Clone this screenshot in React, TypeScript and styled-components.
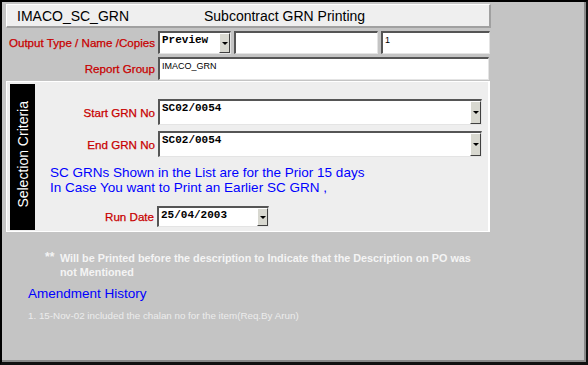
import React from 'react';
import styled, { createGlobalStyle } from 'styled-components';

const GlobalStyle = createGlobalStyle`
  html, body {
    margin: 0;
    padding: 0;
    background: #c4c4c4;
  }
`;

// Outer window
const Frame = styled.div`
  box-sizing: border-box;
  width: 588px;
  height: 365px;
  background: #c4c4c4;
  border-top: 2px solid #000;
  border-left: 2px solid #000;
  border-right: 2px solid #111;
  border-bottom: 3px solid #111;
  box-shadow: inset -2px -2px 0 #8a8a8a;
  padding: 2px 0 0 4px;
  font-family: "Liberation Sans", Arial, sans-serif;
  display: flex;
  flex-direction: column;
`;

const TitleBar = styled.div`
  box-sizing: border-box;
  width: 485px;
  height: 24px;
  background: #efefef;
  border-left: 1px solid #fff;
  border-top: 1px solid #fff;
  border-right: 2px solid #a0a0a0;
  border-bottom: 2px solid #a0a0a0;
  display: flex;
  align-items: center;
  font-size: 14px;
  color: #000;
`;

const TitleCode = styled.span`
  padding-left: 10px;
  width: 187px;
`;

const FormBlock = styled.div`
  width: 484px;
  display: flex;
  flex-direction: column;
  gap: 3px;
  padding-top: 3px;
`;

const Row = styled.div<{ $h?: number }>`
  display: flex;
  align-items: center;
  height: ${p => p.$h ?? 23}px;
`;

const Label = styled.span<{ $w?: number }>`
  width: ${p => p.$w ?? 149}px;
  text-align: right;
  padding-right: 3px;
  color: #c80000;
  font-size: 11.6px;
  font-weight: normal;
  -webkit-text-stroke: 0.25px #c80000;
  white-space: nowrap;
  flex-shrink: 0;
`;

const Sunken = styled.div<{ $w: number; $h?: number }>`
  box-sizing: border-box;
  width: ${p => p.$w}px;
  height: ${p => p.$h ?? 23}px;
  background: #fff;
  border-top: 2px solid #555;
  border-left: 2px solid #555;
  border-right: 1px solid #e4e4e4;
  border-bottom: 1px solid #e4e4e4;
  display: flex;
  margin-right: 3px;
  flex-shrink: 0;
`;

const Value = styled.span<{ $mono?: boolean }>`
  flex: 1;
  padding: 1px 0 0 2px;
  font-family: ${p => (p.$mono ? '"Liberation Mono", "Courier New", monospace' : '"Liberation Sans", Arial, sans-serif')};
  font-size: ${p => (p.$mono ? 11 : 9)}px;
  font-weight: ${p => (p.$mono ? 'bold' : 'normal')};
  line-height: 12px;
  color: #000;
  white-space: nowrap;
`;

const DropButton = styled.div`
  box-sizing: border-box;
  width: 11px;
  height: 100%;
  background: #d8d8d0;
  border-left: 1px solid #fff;
  border-top: 1px solid #fff;
  border-right: 1px solid #404040;
  border-bottom: 1px solid #404040;
  display: flex;
  align-items: center;
  justify-content: center;
  &::after {
    content: '';
    border-left: 3px solid transparent;
    border-right: 3px solid transparent;
    border-top: 3px solid #000;
  }
`;

const Panel = styled.div`
  box-sizing: border-box;
  width: 484px;
  height: 151px;
  margin-top: 1px;
  background: #eeeeee;
  border: 1px solid #fff;
  border-right: 2px solid #fff;
  padding: 2px 0 1px 3px;
  display: flex;
`;

const SideBar = styled.div`
  width: 25px;
  background: #000;
  display: flex;
  align-items: center;
  justify-content: center;
  flex-shrink: 0;
`;

const SideText = styled.span`
  writing-mode: vertical-rl;
  transform: rotate(180deg);
  color: #fff;
  font-size: 14px;
  white-space: nowrap;
  padding-top: 6px;
`;

const PanelBody = styled.div`
  display: flex;
  flex-direction: column;
  padding-top: 15px;
`;

const Note = styled.div`
  color: #0000ff;
  font-size: 13.5px;
  line-height: 15px;
  padding: 8px 0 0 15px;
`;

const Footer = styled.div`
  padding: 19px 0 0 39px;
  color: #f4f4f4;
  font-size: 10.8px;
  font-weight: bold;
  line-height: 14px;
  display: flex;
`;

const Stars = styled.span`
  width: 15px;
  font-size: 12px;
  line-height: 12px;
`;

const History = styled.div`
  color: #0000ff;
  font-size: 13.5px;
  padding: 7px 0 0 22px;
`;

const HistoryItem = styled.div`
  color: #ececec;
  font-size: 9.8px;
  padding: 9px 0 0 22px;
`;

interface ComboProps {
  w: number;
  h?: number;
  value: string;
}

function Combo({ w, h, value }: ComboProps) {
  return (
    <Sunken $w={w} $h={h}>
      <Value $mono>{value}</Value>
      <DropButton />
    </Sunken>
  );
}

export default function App() {
  return (
    <>
      <GlobalStyle />
      <Frame>
        <TitleBar>
          <TitleCode>IMACO_SC_GRN</TitleCode>
          <span>Subcontract GRN Printing</span>
        </TitleBar>
        <FormBlock>
          <Row>
            <Label>Output Type / Name /Copies</Label>
            <Combo w={73} value="Preview" />
            <Sunken $w={144} />
            <Sunken $w={109}>
              <Value>1</Value>
            </Sunken>
          </Row>
          <Row>
            <Label $w={149}>Report Group</Label>
            <Sunken $w={331}>
              <Value>IMACO_GRN</Value>
            </Sunken>
          </Row>
        </FormBlock>
        <Panel>
          <SideBar>
            <SideText>Selection Criteria</SideText>
          </SideBar>
          <PanelBody>
            <Row $h={26}>
              <Label $w={120}>Start GRN No</Label>
              <Combo w={324} h={26} value="SC02/0054" />
            </Row>
            <Row $h={26} style={{ marginTop: 6 }}>
              <Label $w={120}>End GRN No</Label>
              <Combo w={324} h={26} value="SC02/0054" />
            </Row>
            <Note>
              SC GRNs Shown in the List are for the Prior 15 days
              <br />
              In Case You want to Print an Earlier SC GRN ,
            </Note>
            <Row $h={21} style={{ marginTop: 11 }}>
              <Label $w={119}>Run Date</Label>
              <Combo w={112} h={21} value="25/04/2003" />
            </Row>
          </PanelBody>
        </Panel>
        <Footer>
          <Stars>**</Stars>
          <span>
            Will be Printed before the description to Indicate that the Description on PO was
            <br />
            not Mentioned
          </span>
        </Footer>
        <History>Amendment History</History>
        <HistoryItem>1. 15-Nov-02 included the chalan no for the item(Req.By Arun)</HistoryItem>
      </Frame>
    </>
  );
}
